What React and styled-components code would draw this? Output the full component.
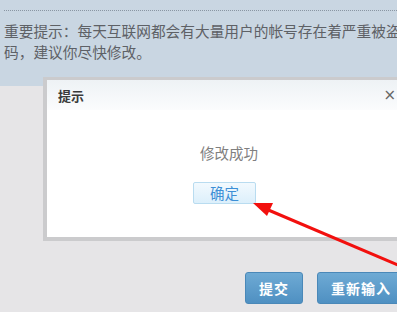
import React from "react";
import styled, { createGlobalStyle } from "styled-components";

const GlobalStyle = createGlobalStyle`
  html, body {
    margin: 0;
    padding: 0;
    width: 397px;
    height: 312px;
    overflow: hidden;
    background: #e6e5e7;
    font-family: "Noto Sans CJK SC", "Noto Sans", sans-serif;
  }
`;

const Page = styled.div`
  position: relative;
  width: 397px;
  height: 312px;
  overflow: hidden;
`;

const Notice = styled.section`
  background: #c9d6e2;
  height: 86px;
  padding: 10px 0 0 4px;
  box-sizing: border-box;
`;

const Divider = styled.div`
  border-top: 1px dotted #8a96a3;
  margin-bottom: 9px;
`;

const NoticeText = styled.p`
  margin: 0;
  font-size: 14.7px;
  line-height: 21px;
  color: #5e6166;
  white-space: nowrap;
`;

const Actions = styled.div`
  display: flex;
  gap: 14px;
  padding: 186px 0 0 245px;
`;

const ActionButton = styled.button`
  flex: none;
  height: 32px;
  padding: 0 13px;
  border: 1px solid #4a88b8;
  border-radius: 3px;
  background: linear-gradient(#6eaad4, #4f90c2);
  color: #fff;
  font-family: inherit;
  font-size: 14px;
  font-weight: bold;
  letter-spacing: 1px;
`;

const Dialog = styled.div`
  position: absolute;
  left: 43px;
  top: 77px;
  width: 364px;
  height: 157px;
  border: 3px solid rgba(140, 140, 145, 0.45);
  border-left-width: 4px;
  border-bottom-width: 4px;
  background: #fff;
`;

const DialogHeader = styled.div`
  display: flex;
  align-items: center;
  justify-content: space-between;
  height: 30px;
  padding: 0 15px 0 11px;
  background: linear-gradient(#eef2f5, #fbfcfd);
`;

const DialogTitle = styled.span`
  font-size: 13px;
  font-weight: bold;
  color: #3a3a3a;
`;

const Close = styled.span`
  font-size: 15px;
  color: #666;
  font-family: "DejaVu Sans", sans-serif;
`;

const DialogBody = styled.div`
  display: flex;
  flex-direction: column;
  align-items: center;
  padding-top: 34px;
`;

const Message = styled.div`
  font-size: 14.5px;
  line-height: 18px;
  color: #808080;
`;

const OkButton = styled.button`
  margin: 20px 9px 0 0;
  width: 63px;
  height: 22px;
  padding: 0;
  border: 1px solid #b9dcf0;
  border-radius: 2px;
  background: linear-gradient(#f2f9fe, #dcEFfb);
  color: #3d8fd6;
  font-family: inherit;
  font-size: 14.5px;
  line-height: 20px;
`;

const Arrow = styled.svg`
  position: absolute;
  left: 0;
  top: 0;
  pointer-events: none;
`;

export default function App() {
  return (
    <Page>
      <GlobalStyle />
      <Notice>
        <Divider />
        <NoticeText>重要提示：每天互联网都会有大量用户的帐号存在着严重被盗的风险。如果你正在使用与其他网站相同的密</NoticeText>
        <NoticeText>码，建议你尽快修改。</NoticeText>
      </Notice>
      <Actions>
        <ActionButton>提交</ActionButton>
        <ActionButton>重新输入</ActionButton>
      </Actions>
      <Dialog>
        <DialogHeader>
          <DialogTitle>提示</DialogTitle>
          <Close>×</Close>
        </DialogHeader>
        <DialogBody>
          <Message>修改成功</Message>
          <OkButton>确定</OkButton>
        </DialogBody>
      </Dialog>
      <Arrow width="397" height="312" viewBox="0 0 397 312">
        <line x1="400" y1="266" x2="266" y2="209" stroke="#f2100e" strokeWidth="3" />
        <polygon points="253,203 273,203 267,216" fill="#f2100e" />
      </Arrow>
    </Page>
  );
}
